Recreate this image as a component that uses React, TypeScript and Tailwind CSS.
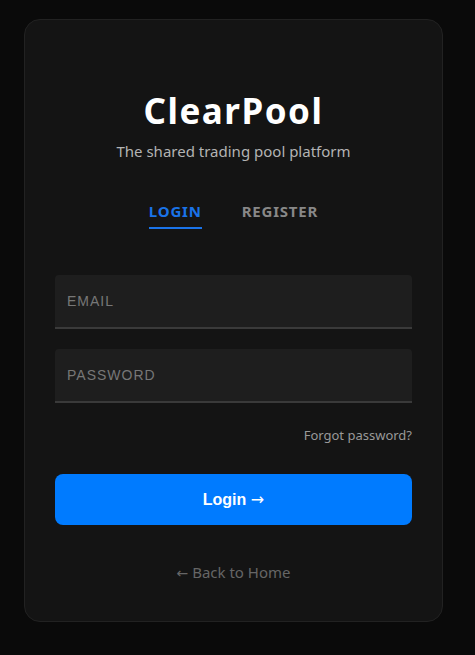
import { useState } from "react";

export default function App() {
  const [tab, setTab] = useState<"login" | "register">("login");

  return (
    <div className="min-h-[655px] bg-[#0a0a0a] pt-[19px] pl-[24px] font-['Noto_Sans',sans-serif]">
      <div className="w-[419px] rounded-2xl border border-[#222222] bg-[#141414] px-[30px] pt-[69px] pb-[37px]">
        <div className="text-center">
          <h1 className="text-[35px] leading-[44px] font-bold tracking-[1.5px] text-white">ClearPool</h1>
          <p className="mt-[7px] text-[15px] text-[#b3b3b3]">The shared trading pool platform</p>
        </div>

        <div className="mt-[38px] flex justify-center gap-[40px]">
          <button
            onClick={() => setTab("login")}
            className={`border-b-2 pb-[6px] text-[15px] leading-[20px] font-bold tracking-[0.8px] ${
              tab === "login" ? "border-[#1a73e8] text-[#1a73e8]" : "border-transparent text-[#888888]"
            }`}
          >
            LOGIN
          </button>
          <button
            onClick={() => setTab("register")}
            className={`border-b-2 pb-[6px] text-[15px] leading-[20px] font-bold tracking-[0.8px] ${
              tab === "register" ? "border-[#1a73e8] text-[#1a73e8]" : "border-transparent text-[#888888]"
            }`}
          >
            REGISTER
          </button>
        </div>

        <form className="mt-[46px] flex flex-col" onSubmit={(e) => e.preventDefault()}>
          <input
            type="email"
            placeholder="EMAIL"
            className="h-[54px] rounded-t-[4px] border-b-2 border-[#3a3a3a] bg-[#1e1e1e] px-[12px] font-['Liberation_Sans',sans-serif] text-[14px] tracking-[1px] text-white placeholder:text-[#777777] outline-none"
          />
          <input
            type="password"
            placeholder="PASSWORD"
            className="mt-[20px] h-[54px] rounded-t-[4px] border-b-2 border-[#3a3a3a] bg-[#1e1e1e] px-[12px] font-['Liberation_Sans',sans-serif] text-[14px] tracking-[1px] text-white placeholder:text-[#777777] outline-none"
          />
          <div className="mt-[23px] text-right text-[13px] text-[#999999]">Forgot password?</div>
          <button
            type="submit"
            className="mt-[29px] h-[51px] rounded-[8px] bg-[#007bff] font-['Liberation_Sans',sans-serif] text-[16px] font-bold text-white"
          >
            Login <span className="font-['DejaVu_Sans',sans-serif] font-normal">→</span>
          </button>
        </form>

        <div className="mt-[36px] text-center text-[15px] text-[#666666]">
          <span className="font-['DejaVu_Sans',sans-serif] text-[14px]">←</span> Back to Home
        </div>
      </div>
    </div>
  );
}
